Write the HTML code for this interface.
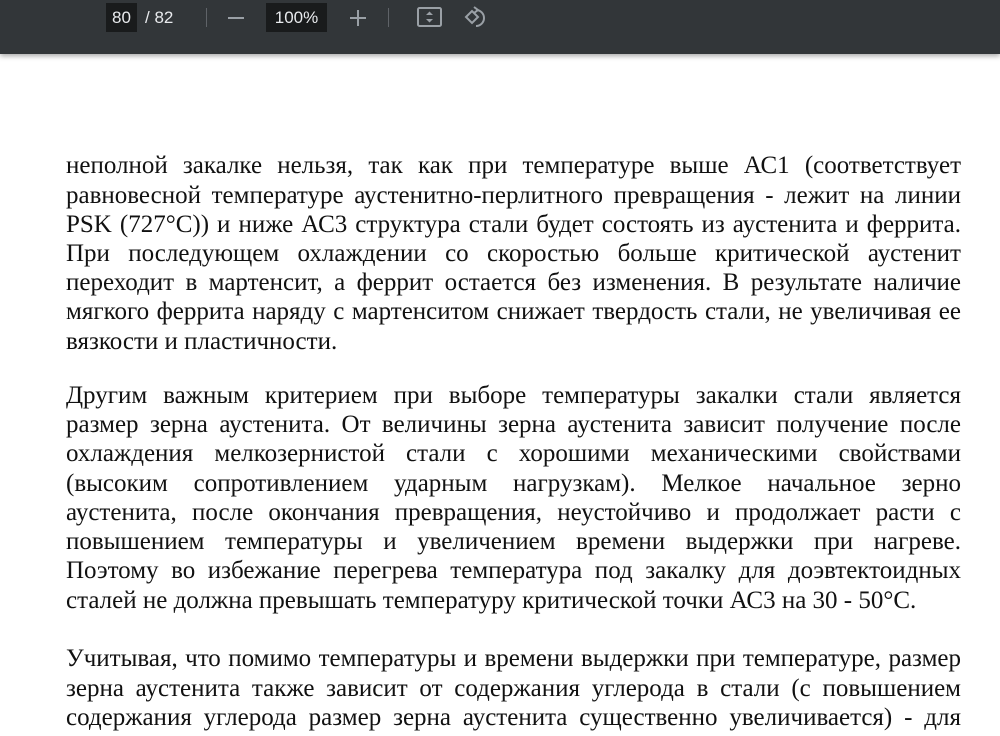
<!DOCTYPE html>
<html><head><meta charset="utf-8"><style>
html,body{margin:0;padding:0;width:1000px;height:736px;overflow:hidden;background:#fff;}
.tb{position:absolute;left:0;top:0;width:1000px;height:54px;background:#323639;box-shadow:0 2px 5px rgba(0,0,0,.35);font-family:"Liberation Sans",sans-serif;color:#e8eaed;font-size:17px;z-index:2}
.box{position:absolute;top:3px;height:29px;background:#191b1c;line-height:29px;text-align:center;}
.t{position:absolute;top:3px;line-height:29px;}
.sep{position:absolute;top:8px;width:1px;height:19px;background:#5f6368;}
.l{position:absolute;left:66px;width:895px;font-family:"Liberation Serif",serif;font-size:25px;color:#111;text-align:justify;text-align-last:justify;white-space:nowrap;line-height:29px;height:29px;}
.e{text-align-last:left;}
</style></head><body>
<div class="tb">
<div class="box" style="left:106px;width:31px;">80</div>
<div class="t" style="left:145px;">/ 82</div>
<div class="sep" style="left:206px"></div>
<div style="position:absolute;left:228px;top:17px;width:16px;height:2px;background:#9aa0a6"></div>
<div class="box" style="left:266px;width:61px;">100%</div>
<div style="position:absolute;left:350px;top:17px;width:16px;height:2px;background:#9aa0a6"></div>
<div style="position:absolute;left:357px;top:10px;width:2px;height:16px;background:#9aa0a6"></div>
<div class="sep" style="left:388px"></div>
<svg style="position:absolute;left:416px;top:5px" width="28" height="24" viewBox="0 0 28 24"><rect x="2" y="3" width="23" height="18" rx="1.5" fill="none" stroke="#9aa0a6" stroke-width="2"/><path d="M10 10l3.5-3.5 3.5 3.5zM10 14l3.5 3.5 3.5-3.5z" fill="#9aa0a6"/></svg>
<svg style="position:absolute;left:463px;top:5px" width="28" height="26" viewBox="0 0 28 26"><path d="M3 12l6-6 6 6-6 6z" fill="none" stroke="#9aa0a6" stroke-width="2"/><path d="M13 5a8 8 0 1 1 0 16" fill="none" stroke="#9aa0a6" stroke-width="2"/><path d="M11 2l4 3-4 3" fill="none" stroke="#9aa0a6" stroke-width="2"/></svg>
</div>

<div class="l" style="top:151px">неполной закалке нельзя, так как при температуре выше АС1 (соответствует</div>
<div class="l" style="top:181px">равновесной температуре аустенитно-перлитного превращения - лежит на линии</div>
<div class="l" style="top:210px">PSK (727°C)) и ниже АС3 структура стали будет состоять из аустенита и феррита.</div>
<div class="l" style="top:239px">При последующем охлаждении со скоростью больше критической аустенит</div>
<div class="l" style="top:268px">переходит в мартенсит, а феррит остается без изменения. В результате наличие</div>
<div class="l" style="top:297px">мягкого феррита наряду с мартенситом снижает твердость стали, не увеличивая ее</div>
<div class="l e" style="top:327px">вязкости и пластичности.</div>

<div class="l" style="top:381px">Другим важным критерием при выборе температуры закалки стали является</div>
<div class="l" style="top:410px">размер зерна аустенита. От величины зерна аустенита зависит получение после</div>
<div class="l" style="top:439px">охлаждения мелкозернистой стали с хорошими механическими свойствами</div>
<div class="l" style="top:469px">(высоким сопротивлением ударным нагрузкам). Мелкое начальное зерно</div>
<div class="l" style="top:498px">аустенита, после окончания превращения, неустойчиво и продолжает расти с</div>
<div class="l" style="top:527px">повышением температуры и увеличением времени выдержки при нагреве.</div>
<div class="l" style="top:556px">Поэтому во избежание перегрева температура под закалку для доэвтектоидных</div>
<div class="l e" style="top:586px">сталей не должна превышать температуру критической точки АС3 на 30 - 50°С.</div>

<div class="l" style="top:644px">Учитывая, что помимо температуры и времени выдержки при температуре, размер</div>
<div class="l" style="top:674px">зерна аустенита также зависит от содержания углерода в стали (с повышением</div>
<div class="l" style="top:703px">содержания углерода размер зерна аустенита существенно увеличивается) - для</div>
</body></html>
